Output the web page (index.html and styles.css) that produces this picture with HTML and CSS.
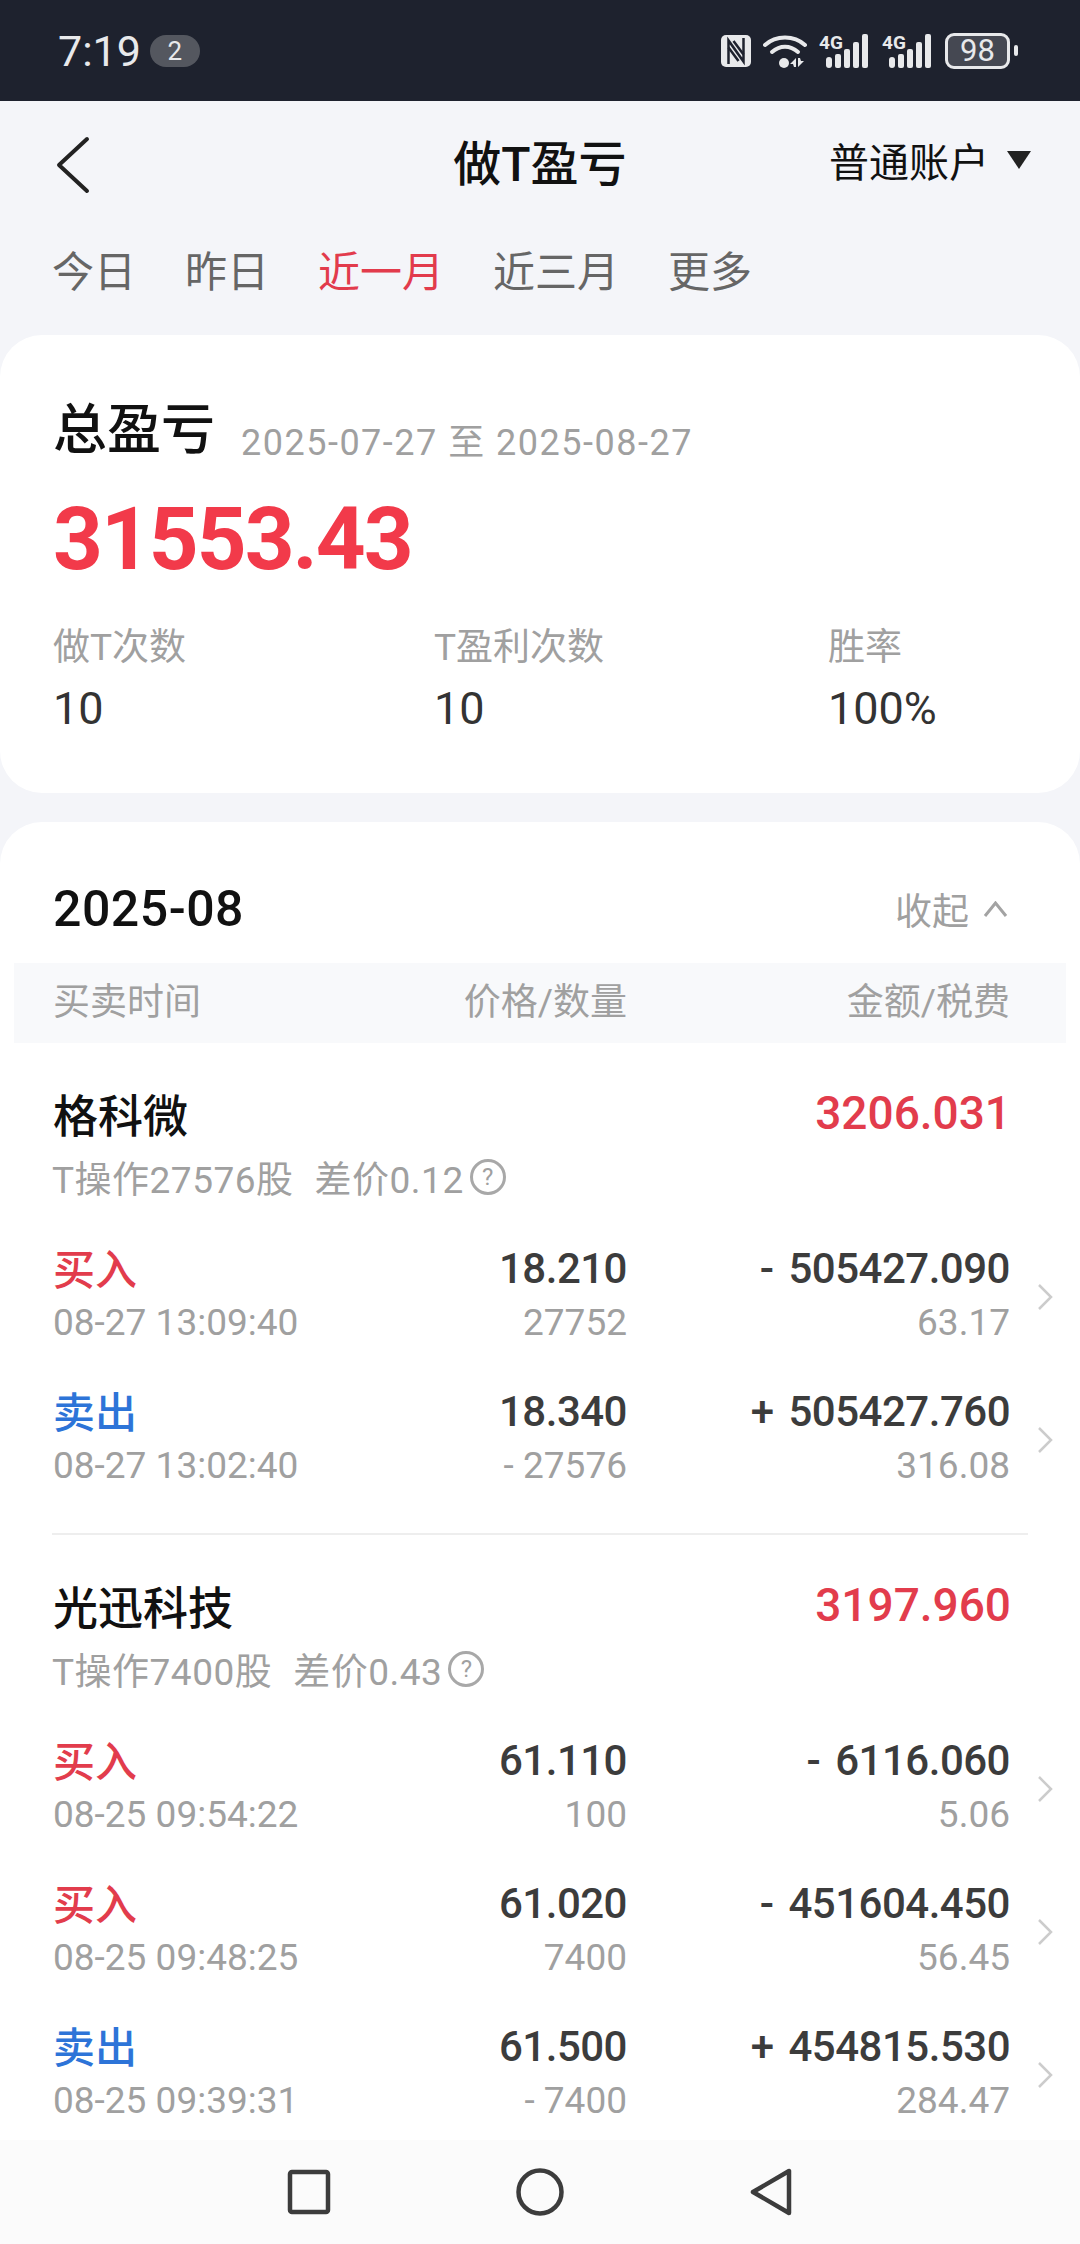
FILE: index.html
```html
<!DOCTYPE html>
<html lang="zh-CN">
<head>
    <meta charset="UTF-8">
    <meta name="viewport" content="width=device-width, initial-scale=1.0">
    <title>做T盈亏</title>
    <link rel="stylesheet" href="styles.css">
</head>
<body>
    <div class="phone">
        <div class="status-bar">
            <div class="status-left">
                <span class="clock">7:19</span>
                <span class="notif-count">2</span>
            </div>
            <div class="status-right">
                <svg class="ic-nfc" width="30" height="32" viewBox="0 0 30 32" fill="none">
                    <rect width="30" height="32" rx="5" fill="#e8e9eb"/>
                    <path d="M7.500 29V5.500L22.500 26.500V3" stroke="#1e222e" stroke-width="2.500"/>
                    <path d="M12.500 6L22.500 19.500M7.500 12.500L17.500 26" stroke="#1e222e" stroke-width="2.500"/>
                </svg>
                <svg class="ic-wifi" width="44" height="34" viewBox="0 0 44 34" fill="none">
                    <path d="M2 11C13 1 31 1 42 11" stroke="#e8e9eb" stroke-width="4" stroke-linecap="round"/>
                    <path d="M9 18c8-7 18-7 26 0" stroke="#e8e9eb" stroke-width="4" stroke-linecap="round"/>
                    <circle cx="21" cy="29" r="5" fill="#e8e9eb"/>
                    <path d="M33 24v9h-2l-1-3h-3zM35 33v-9h2l1 3h3z" fill="#e8e9eb"/>
                </svg>
                <svg class="ic-signal" width="51" height="34" viewBox="0 0 51 34">
                    <text class="net-label" x="0" y="15">4G</text>
                    <rect x="7" y="23" width="6" height="11" rx="3" fill="#e8e9eb"/>
                    <rect x="16" y="20" width="6" height="14" rx="2" fill="#e8e9eb"/>
                    <rect x="25" y="15" width="6" height="19" rx="2" fill="#e8e9eb"/>
                    <rect x="34" y="8" width="6" height="26" rx="2" fill="#e8e9eb"/>
                    <rect x="43" y="0" width="6" height="34" rx="2" fill="#e8e9eb"/>
                </svg>
                <svg class="ic-signal" width="51" height="34" viewBox="0 0 51 34">
                    <text class="net-label" x="0" y="15">4G</text>
                    <rect x="7" y="23" width="6" height="11" rx="3" fill="#e8e9eb"/>
                    <rect x="16" y="20" width="6" height="14" rx="2" fill="#e8e9eb"/>
                    <rect x="25" y="15" width="6" height="19" rx="2" fill="#e8e9eb"/>
                    <rect x="34" y="8" width="6" height="26" rx="2" fill="#e8e9eb"/>
                    <rect x="43" y="0" width="6" height="34" rx="2" fill="#e8e9eb"/>
                </svg>
                <div class="battery">
                    <span class="battery-body">98</span>
                    <span class="battery-nub"></span>
                </div>
            </div>
        </div>

        <main class="content">
            <header class="top-bar">
                <svg class="back" width="34" height="58" viewBox="0 0 34 58" fill="none">
                    <path d="M31 3L3 29l28 26" stroke="#222" stroke-width="4" stroke-linecap="round" stroke-linejoin="round"/>
                </svg>
                <h1 class="page-title">做T盈亏</h1>
                <div class="account">
                    <span>普通账户</span>
                    <span class="caret"></span>
                </div>
            </header>

            <nav class="tabs">
                <span>今日</span>
                <span>昨日</span>
                <span class="active">近一月</span>
                <span>近三月</span>
                <span>更多</span>
            </nav>

            <section class="card summary">
                <div class="summary-head">
                    <span class="summary-title">总盈亏</span>
                    <span class="summary-range">2025-07-27 至 2025-08-27</span>
                </div>
                <div class="summary-total">31553.43</div>
                <div class="stats">
                    <div class="stat stat-a">
                        <div class="stat-label">做T次数</div>
                        <div class="stat-value">10</div>
                    </div>
                    <div class="stat stat-b">
                        <div class="stat-label">T盈利次数</div>
                        <div class="stat-value">10</div>
                    </div>
                    <div class="stat">
                        <div class="stat-label">胜率</div>
                        <div class="stat-value">100%</div>
                    </div>
                </div>
            </section>

            <section class="card records">
                <div class="month-row">
                    <span class="month">2025-08</span>
                    <span class="collapse">收起
                        <svg width="25" height="16" viewBox="0 0 25 16" fill="none"><path d="M2 15L12.500 2 23 15" stroke="#a3a3a3" stroke-width="3"/></svg>
                    </span>
                </div>
                <div class="table-head">
                    <span>买卖时间</span>
                    <span class="ta-r">价格/数量</span>
                    <span class="ta-r">金额/税费</span>
                </div>

                <div class="stock">
                    <div class="stock-head">
                        <span class="stock-name">格科微</span>
                        <span class="stock-profit">3206.031</span>
                    </div>
                    <div class="stock-sub">
                        <span>T操作27576股</span>
                        <span>差价0.12</span>
                        <span class="help">?</span>
                    </div>
                    <div class="trade">
                        <div class="trade-cols">
                            <span class="side buy">买入</span>
                            <span class="num ta-r">18.210</span>
                            <span class="num ta-r">- 505427.090</span>
                            <span class="minor">08-27 13:09:40</span>
                            <span class="minor ta-r">27752</span>
                            <span class="minor ta-r">63.17</span>
                        </div>
                        <svg class="more" width="16" height="28" viewBox="0 0 16 28" fill="none"><path d="M2 2l12 12L2 26" stroke="#cccccc" stroke-width="2.500"/></svg>
                    </div>
                    <div class="trade">
                        <div class="trade-cols">
                            <span class="side sell">卖出</span>
                            <span class="num ta-r">18.340</span>
                            <span class="num ta-r">+ 505427.760</span>
                            <span class="minor">08-27 13:02:40</span>
                            <span class="minor ta-r">- 27576</span>
                            <span class="minor ta-r">316.08</span>
                        </div>
                        <svg class="more" width="16" height="28" viewBox="0 0 16 28" fill="none"><path d="M2 2l12 12L2 26" stroke="#cccccc" stroke-width="2.500"/></svg>
                    </div>
                </div>

                <div class="stock stock-next">
                    <div class="stock-head">
                        <span class="stock-name">光迅科技</span>
                        <span class="stock-profit">3197.960</span>
                    </div>
                    <div class="stock-sub">
                        <span>T操作7400股</span>
                        <span>差价0.43</span>
                        <span class="help">?</span>
                    </div>
                    <div class="trade">
                        <div class="trade-cols">
                            <span class="side buy">买入</span>
                            <span class="num ta-r">61.110</span>
                            <span class="num ta-r">- 6116.060</span>
                            <span class="minor">08-25 09:54:22</span>
                            <span class="minor ta-r">100</span>
                            <span class="minor ta-r">5.06</span>
                        </div>
                        <svg class="more" width="16" height="28" viewBox="0 0 16 28" fill="none"><path d="M2 2l12 12L2 26" stroke="#cccccc" stroke-width="2.500"/></svg>
                    </div>
                    <div class="trade">
                        <div class="trade-cols">
                            <span class="side buy">买入</span>
                            <span class="num ta-r">61.020</span>
                            <span class="num ta-r">- 451604.450</span>
                            <span class="minor">08-25 09:48:25</span>
                            <span class="minor ta-r">7400</span>
                            <span class="minor ta-r">56.45</span>
                        </div>
                        <svg class="more" width="16" height="28" viewBox="0 0 16 28" fill="none"><path d="M2 2l12 12L2 26" stroke="#cccccc" stroke-width="2.500"/></svg>
                    </div>
                    <div class="trade">
                        <div class="trade-cols">
                            <span class="side sell">卖出</span>
                            <span class="num ta-r">61.500</span>
                            <span class="num ta-r">+ 454815.530</span>
                            <span class="minor">08-25 09:39:31</span>
                            <span class="minor ta-r">- 7400</span>
                            <span class="minor ta-r">284.47</span>
                        </div>
                        <svg class="more" width="16" height="28" viewBox="0 0 16 28" fill="none"><path d="M2 2l12 12L2 26" stroke="#cccccc" stroke-width="2.500"/></svg>
                    </div>
                </div>
            </section>
        </main>

        <footer class="nav-bar">
            <svg width="44" height="46" viewBox="0 0 44 46" fill="none"><rect x="3" y="3" width="38" height="40" rx="2" stroke="#3c3c3c" stroke-width="4.500"/></svg>
            <svg width="48" height="48" viewBox="0 0 48 48" fill="none"><circle cx="24" cy="24" r="21.500" stroke="#3c3c3c" stroke-width="4.500"/></svg>
            <svg width="44" height="48" viewBox="0 0 44 48" fill="none"><path d="M40 3v42L4 24z" stroke="#3c3c3c" stroke-width="4.500" stroke-linejoin="round"/></svg>
        </footer>
    </div>
</body>
</html>
```

FILE: styles.css
```css
body, html {
    margin: 0;
    padding: 0;
    font-family: Roboto, "Noto Sans CJK SC", sans-serif;
    background-color: #f4f5f9;
}

.phone {
    width: 1080px;
    height: 2244px;
    display: flex;
    flex-direction: column;
    overflow: hidden;
}

/* status bar */
.status-bar {
    height: 101px;
    flex-shrink: 0;
    background-color: #1e222e;
    color: #e8e9eb;
    display: flex;
    justify-content: space-between;
    align-items: center;
    padding: 0 62px 0 58px;
    box-sizing: border-box;
}

.status-left, .status-right {
    display: flex;
    align-items: center;
}

.clock {
    font-size: 43px;
    line-height: 50px;
}

.notif-count {
    margin-left: 9px;
    width: 50px;
    height: 32px;
    border-radius: 16px;
    background-color: #54575f;
    font-size: 26px;
    line-height: 32px;
    text-align: center;
}

.status-right svg {
    display: block;
}

.ic-wifi, .ic-signal {
    margin-left: 12px;
}

.ic-signal {
    overflow: visible;
}

.net-label {
    font-size: 19px;
    font-weight: 700;
    fill: #e8e9eb;
}

.battery {
    margin-left: 12px;
    display: flex;
    align-items: center;
}

.battery-body {
    width: 65px;
    height: 36px;
    box-sizing: border-box;
    border: 3px solid #e8e9eb;
    border-radius: 9px;
    background-color: #454852;
    font-size: 31px;
    line-height: 30px;
    text-align: center;
}

.battery-nub {
    margin-left: 4px;
    width: 4px;
    height: 11px;
    border-radius: 2px;
    background-color: #e8e9eb;
}

.content {
    flex: 1;
    overflow: hidden;
}

/* title row */
.top-bar {
    height: 122px;
    box-sizing: border-box;
    position: relative;
    display: flex;
    align-items: center;
    justify-content: space-between;
    padding: 0 49px 5px 56px;
}

.back {
    margin-top: 10px;
}

.page-title {
    position: absolute;
    left: 0;
    right: 0;
    margin: 0;
    text-align: center;
    font-size: 48px;
    font-weight: 500;
    color: #111;
}

.account {
    display: flex;
    align-items: center;
    font-size: 40px;
    color: #111;
}

.caret {
    margin-left: 18px;
    width: 0;
    height: 0;
    border-left: 12px solid transparent;
    border-right: 12px solid transparent;
    border-top: 18px solid #222;
}

/* date filter */
.tabs {
    height: 90px;
    display: flex;
    align-items: center;
    gap: 49px;
    padding-left: 52px;
    font-size: 42px;
    color: #666;
}

.tabs .active {
    color: #e23b4c;
}

.card {
    background-color: #fff;
    border-radius: 42px;
}

.summary {
    margin-top: 22px;
    height: 458px;
    padding: 61px 0 0 53px;
    box-sizing: border-box;
}

.summary-head {
    display: flex;
    align-items: flex-start;
}

.summary-title {
    font-size: 54px;
    font-weight: 500;
    line-height: 70px;
    color: #111;
}

.summary-range {
    margin: 22px 0 0 26px;
    font-size: 36px;
    line-height: 50px;
    letter-spacing: 1.500px;
    color: #a0a0a0;
}

.summary-total {
    margin-top: 21px;
    font-size: 87px;
    font-weight: 700;
    line-height: 100px;
    letter-spacing: -2px;
    color: #f23a4a;
}

.stats {
    margin-top: 34px;
    display: flex;
}

.stat-a {
    width: 381px;
}

.stat-b {
    width: 394px;
}

.stat-label {
    font-size: 37px;
    line-height: 50px;
    color: #a0a0a0;
}

.stat-value {
    margin-top: 6px;
    font-size: 45px;
    line-height: 60px;
    color: #333;
}

/* monthly records */
.records {
    margin-top: 29px;
    padding-bottom: 40px;
}

.month-row {
    height: 141px;
    display: flex;
    justify-content: space-between;
    align-items: center;
    padding: 32px 72px 0 53px;
    box-sizing: border-box;
}

.month {
    font-size: 50px;
    font-weight: 500;
    letter-spacing: 0.500px;
    color: #111;
}

.collapse {
    display: flex;
    align-items: center;
    gap: 14px;
    font-size: 37px;
    color: #a0a0a0;
}

.table-head {
    margin: 0 14px;
    height: 80px;
    box-sizing: border-box;
    padding: 0 0 8px 39px;
    background-color: #f8f9fb;
    display: grid;
    grid-template-columns: 301px 273px 383px;
    align-items: center;
    font-size: 37px;
    color: #a0a0a0;
}

.ta-r {
    text-align: right;
}

.stock {
    padding-top: 40px;
}

.stock-next {
    margin: 5px 52px 0;
    border-top: 2px solid #eeeeee;
}

.stock-next > * {
    margin-left: -52px;
    margin-right: -52px;
}

.stock-head {
    height: 60px;
    margin-bottom: 1px;
    display: flex;
    justify-content: space-between;
    align-items: center;
    padding: 0 69px 0 53px;
}

.stock-name {
    font-size: 45px;
    font-weight: 500;
    color: #111;
}

.stock-profit {
    font-size: 46px;
    font-weight: 500;
    color: #e23c4c;
}

.stock-sub {
    height: 66px;
    margin-bottom: 32px;
    display: flex;
    align-items: center;
    padding-left: 52px;
    font-size: 37px;
    letter-spacing: 0.500px;
    color: #a0a0a0;
}

.stock-sub span + span {
    margin-left: 21px;
}

.stock-sub .help {
    margin-left: 6px;
    width: 36px;
    height: 36px;
    box-sizing: border-box;
    border: 3px solid #a8a8a8;
    border-radius: 50%;
    font-size: 24px;
    line-height: 30px;
    text-align: center;
    letter-spacing: 0;
}

.trade {
    height: 143px;
    display: flex;
}

.trade-cols {
    margin-left: 53px;
    display: grid;
    grid-template-columns: 301px 273px 383px;
    grid-auto-rows: 52px;
    align-items: center;
}

.more {
    margin: 41px 0 0 27px;
}

.side {
    padding-bottom: 4px;
    font-size: 42px;
    font-weight: 500;
}

.buy {
    color: #e23c4c;
}

.sell {
    color: #2d74d8;
}

.num {
    font-size: 42px;
    font-weight: 500;
    letter-spacing: -0.500px;
    word-spacing: 5px;
    color: #3c3c3c;
}

.minor {
    padding-top: 5px;
    font-size: 37px;
    color: #a0a0a0;
}

.nav-bar {
    height: 104px;
    flex-shrink: 0;
    background-color: #fbfbfb;
    display: flex;
    justify-content: center;
    align-items: center;
    gap: 185px;
}
```
